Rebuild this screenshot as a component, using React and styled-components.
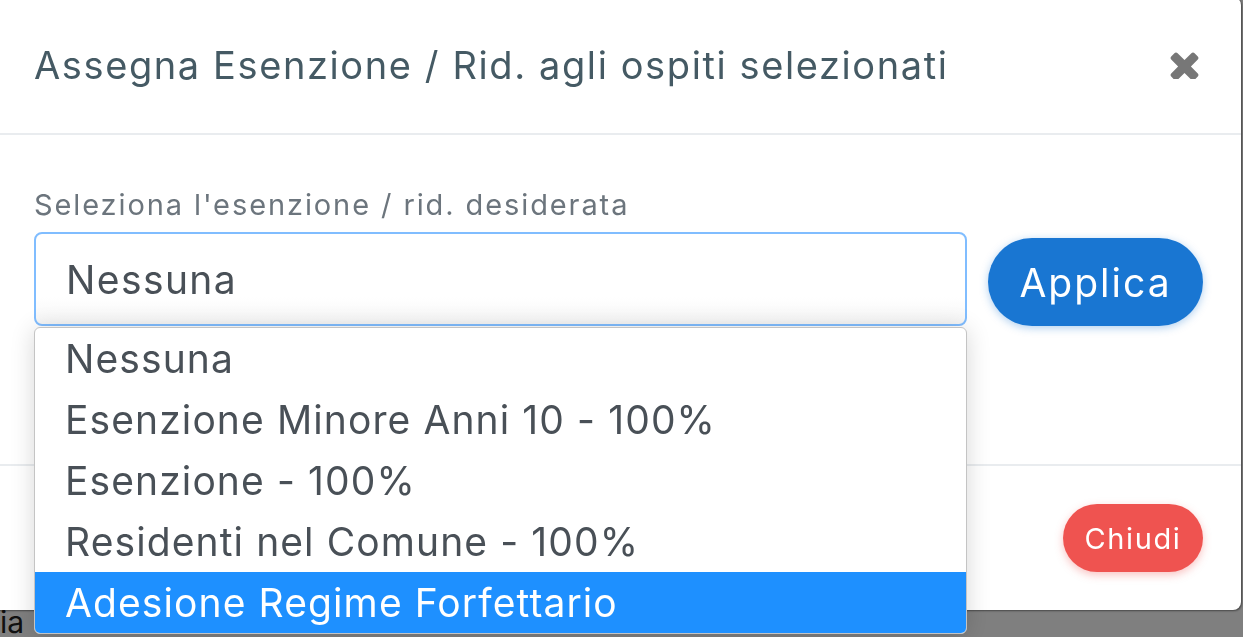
import React from "react";
import styled, { createGlobalStyle } from "styled-components";

const Global = createGlobalStyle`
  html, body { margin: 0; padding: 0; height: 100%; overflow: hidden; }
  body { background: #fff; font-family: Inter, "Open Sans", sans-serif; }
`;

const Page = styled.div`
  height: 100vh;
  padding-top: 604px;
  box-sizing: border-box;
  font-size: 30px;
  color: #222;
  font-family: Inter, sans-serif;
`;

const Backdrop = styled.div`
  position: fixed;
  inset: 0;
  background: rgba(0, 0, 0, 0.5);
`;

const Dialog = styled.div`
  position: absolute;
  left: -16px;
  right: 2px;
  top: -3px;
  height: 613px;
  background: #fff;
  border-radius: 8px;
  box-shadow: 1px 1px 2px rgba(0, 0, 0, 0.45);
  display: flex;
  flex-direction: column;
  box-sizing: border-box;
`;

const Header = styled.div`
  height: 138px;
  flex: none;
  box-sizing: border-box;
  display: flex;
  align-items: center;
  justify-content: space-between;
  padding: 0 42px 0 50px;
  border-bottom: 2px solid #e9ecef;
`;

const Title = styled.h4`
  margin: 0;
  font-weight: 400;
  font-size: 38px;
  color: #455a64;
  letter-spacing: 1.6px;
`;

const CloseButton = styled.button`
  border: 0;
  background: none;
  padding: 0;
  width: 29px;
  height: 28px;
  display: flex;
  color: #777;
  cursor: pointer;
  svg { width: 29px; height: 28px; }
`;

const Body = styled.div`
  height: 331px;
  flex: none;
  box-sizing: border-box;
  padding: 50px 38px 0 50px;
  border-bottom: 2px solid #e9ecef;
`;

const Label = styled.label`
  display: block;
  font-size: 29px;
  color: #6c757d;
  line-height: 40px;
  letter-spacing: 1.9px;
  margin-bottom: 7px;
`;

const Row = styled.div`
  display: flex;
  align-items: flex-end;
  gap: 21px;
`;

const SelectWrap = styled.div`
  position: relative;
  flex: none;
  width: 933px;
`;

const SelectBox = styled.div`
  height: 94px;
  box-sizing: border-box;
  border: 2px solid #80bdff;
  border-radius: 8px;
  padding: 0 30px;
  display: flex;
  align-items: center;
  font-size: 39px;
  letter-spacing: 1.4px;
  color: #495057;
  background: linear-gradient(#fff 70%, #f6f6f6);
`;

const Menu = styled.ul`
  position: absolute;
  left: 0;
  right: 0;
  top: 95px;
  margin: 0;
  padding: 0;
  list-style: none;
  background: #fff;
  border: 1px solid #c4c4c4;
  border-radius: 6px;
  overflow: hidden;
  box-shadow: 0 2px 24px rgba(0, 0, 0, 0.16);
  z-index: 2;
`;

const Option = styled.li`
  height: 61px;
  display: flex;
  align-items: center;
  padding-left: 30px;
  font-size: 39px;
  letter-spacing: 1.1px;
  color: ${(p) => (p.$active ? "#fff" : "#495057")};
  background: ${(p) => (p.$active ? "#1e90ff" : "transparent")};
`;

const Pill = styled.button`
  border: 0;
  border-radius: 999px;
  color: #fff;
  font-family: inherit;
  cursor: pointer;
`;

const ApplyButton = styled(Pill)`
  width: 215px;
  height: 88px;
  font-size: 39px;
  letter-spacing: 2px;
  background: #1976d2;
  box-shadow: 0 2px 8px rgba(25, 118, 210, 0.35);
`;

const Footer = styled.div`
  flex: 1;
  display: flex;
  align-items: center;
  justify-content: flex-end;
  padding: 0 38px 0 50px;
`;

const CloseAction = styled(Pill)`
  width: 140px;
  height: 68px;
  font-size: 29px;
  letter-spacing: 1.6px;
  background: #ef5350;
  box-shadow: 0 3px 8px rgba(239, 83, 80, 0.35);
`;

const options = [
  "Nessuna",
  "Esenzione Minore Anni 10 - 100%",
  "Esenzione - 100%",
  "Residenti nel Comune - 100%",
  "Adesione Regime Forfettario",
];

const TimesIcon = () => (
  <svg viewBox="300 300 1192 1192" fill="currentColor">
    <path d="M1490 1322q0 40-28 68l-136 136q-28 28-68 28t-68-28l-294-294-294 294q-28 28-68 28t-68-28l-136-136q-28-28-28-68t28-68l294-294-294-294q-28-28-28-68t28-68l136-136q28-28 68-28t68 28l294 294 294-294q28-28 68-28t68 28l136 136q28 28 28 68t-28 68l-294 294 294 294q28 28 28 68z" />
  </svg>
);

export default function App() {
  return (
    <>
      <Global />
      <Page>ia u</Page>
      <Backdrop>
        <Dialog>
          <Header>
            <Title>Assegna Esenzione / Rid. agli ospiti selezionati</Title>
            <CloseButton aria-label="Chiudi">
              <TimesIcon />
            </CloseButton>
          </Header>
          <Body>
            <Label>Seleziona l'esenzione / rid. desiderata</Label>
            <Row>
              <SelectWrap>
                <SelectBox>Nessuna</SelectBox>
                <Menu>
                  {options.map((o, i) => (
                    <Option key={o} $active={i === options.length - 1}>
                      {o}
                    </Option>
                  ))}
                </Menu>
              </SelectWrap>
              <ApplyButton>Applica</ApplyButton>
            </Row>
          </Body>
          <Footer>
            <CloseAction>Chiudi</CloseAction>
          </Footer>
        </Dialog>
      </Backdrop>
    </>
  );
}
